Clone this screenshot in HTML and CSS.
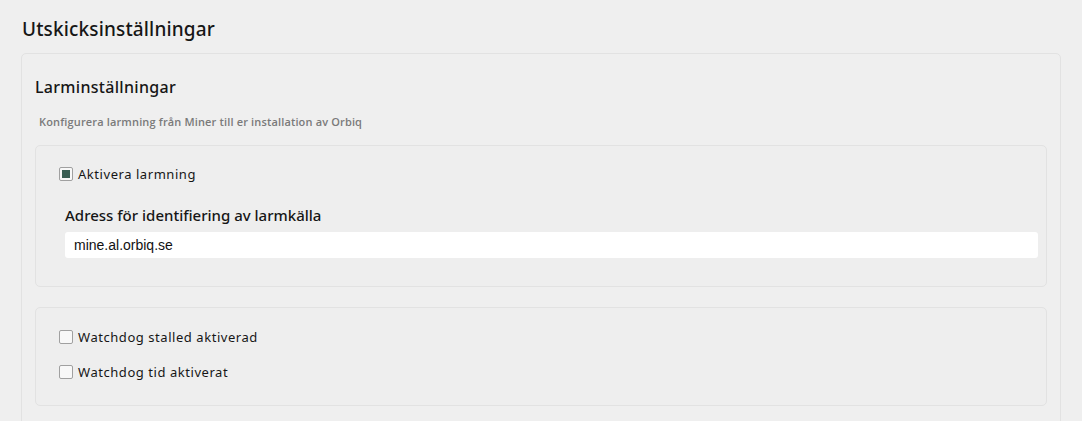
FILE: index.html
```html
<!DOCTYPE html>
<html lang="sv">
<head>
<meta charset="utf-8">
<title>Utskicksinställningar</title>
<link rel="stylesheet" href="styles.css">
</head>
<body>
<div class="page">
  <h1 class="page-title">Utskicksinställningar</h1>
  <section class="card">
    <h2 class="card-title">Larminställningar</h2>
    <p class="card-desc">Konfigurera larmning från Miner till er installation av Orbiq</p>
    <div class="panel panel-alarm">
      <label class="check">
        <input type="checkbox" class="check-box" checked>
        <span class="check-label">Aktivera larmning</span>
      </label>
      <div class="field">
        <label class="field-label" for="addr">Adress för identifiering av larmkälla</label>
        <input id="addr" class="field-input" type="text" value="mine.al.orbiq.se">
      </div>
    </div>
    <div class="panel panel-watchdog">
      <label class="check">
        <input type="checkbox" class="check-box">
        <span class="check-label">Watchdog stalled aktiverad</span>
      </label>
      <label class="check">
        <input type="checkbox" class="check-box">
        <span class="check-label">Watchdog tid aktiverat</span>
      </label>
    </div>
  </section>
</div>
</body>
</html>
```

FILE: styles.css
```css
html, body {
  margin: 0;
  padding: 0;
  background: #efefef;
}
body {
  font-family: "Noto Sans", "DejaVu Sans", sans-serif;
  color: #1a1a1a;
}
.page {
  padding: 17px 21px 0 21px;
}
.page-title {
  margin: 0 0 11px 1px;
  font-size: 19px;
  font-weight: 500;
  line-height: 25px;
  letter-spacing: 0.15px;
  color: #161616;
}
.card {
  border: 1px solid #e2e2e2;
  border-radius: 5px;
  padding: 22px 13px 30px 13px;
  background: #efefef;
}
.card-title {
  margin: 0;
  font-size: 16px;
  font-weight: 500;
  line-height: 22px;
  letter-spacing: 0.3px;
  color: #161616;
}
.card-desc {
  margin: 16px 0 16px 4px;
  font-family: "Open Sans", sans-serif;
  font-size: 11px;
  font-weight: 600;
  line-height: 15px;
  letter-spacing: 0.15px;
  color: #7a7a7a;
}
.panel {
  border: 1px solid #e2e2e2;
  border-radius: 5px;
  background: #eeeeee;
}
.panel-alarm {
  padding: 21px 8px 28px 23px;
}
.panel-watchdog {
  margin-top: 20px;
  padding: 22px 8px 26px 23px;
  display: flex;
  flex-direction: column;
  gap: 21px;
}
.check {
  display: flex;
  align-items: center;
  gap: 5px;
  cursor: pointer;
}
.check-box {
  appearance: none;
  -webkit-appearance: none;
  margin: 0;
  width: 14px;
  height: 14px;
  border: 1px solid #a0a0a0;
  border-radius: 2px;
  background: #f8f8f8;
  position: relative;
  flex: none;
}
.check-box:checked::after {
  content: "";
  position: absolute;
  left: 2px;
  top: 2px;
  width: 8px;
  height: 8px;
  background: #3a5f54;
}
.check-label {
  font-size: 13px;
  line-height: 14px;
  letter-spacing: 0.55px;
  color: #161616;
}
.field {
  margin: 24px 0 0 6px;
}
.field-label {
  display: block;
  font-size: 15px;
  font-weight: 500;
  line-height: 20px;
  letter-spacing: 0;
  color: #161616;
  margin-bottom: 7px;
}
.field-input {
  display: block;
  box-sizing: border-box;
  width: 100%;
  height: 26px;
  border: none;
  border-radius: 3px;
  background: #ffffff;
  padding: 0 9px;
  font-family: "Liberation Sans", Arial, sans-serif;
  font-size: 14px;
  color: #111;
  outline: none;
}
```
